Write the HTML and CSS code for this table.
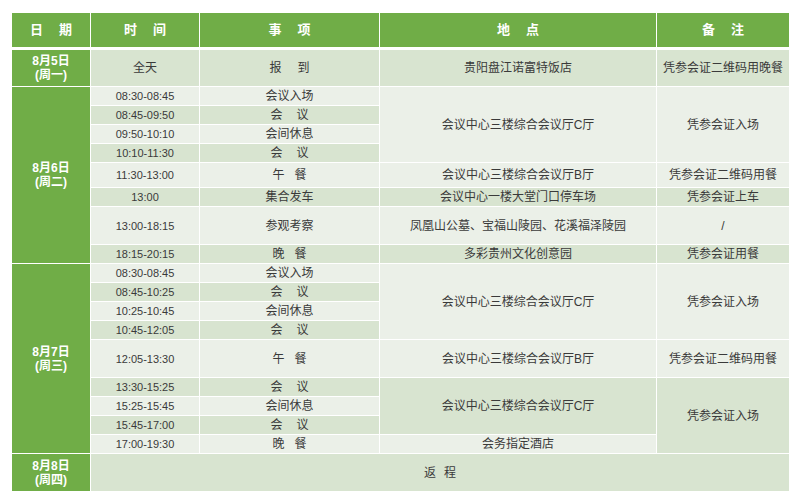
FILE: index.html
```html
<!DOCTYPE html>
<html lang="zh-CN">
<head>
<meta charset="utf-8">
<title>会议日程</title>
<link rel="stylesheet" href="styles.css">
</head>
<body>
<table class="sched">
  <colgroup>
    <col class="c-date"><col class="c-time"><col class="c-item"><col class="c-place"><col class="c-note">
  </colgroup>
  <thead>
    <tr class="h-head">
      <th><span class="hsp">日期</span></th>
      <th><span class="hsp">时间</span></th>
      <th><span class="hsp">事项</span></th>
      <th><span class="hsp">地点</span></th>
      <th><span class="hsp">备注</span></th>
    </tr>
  </thead>
  <tbody>
    <tr class="h36 dk">
      <td class="date">8月5日<br>(周一)</td>
      <td>全天</td>
      <td><span class="sp16">报到</span></td>
      <td>贵阳盘江诺富特饭店</td>
      <td>凭参会证二维码用晚餐</td>
    </tr>

    <tr class="h18 lt">
      <td class="date" rowspan="8">8月6日<br>(周二)</td>
      <td class="tm">08:30-08:45</td>
      <td>会议入场</td>
      <td rowspan="4" class="lt">会议中心三楼综合会议厅C厅</td>
      <td rowspan="4" class="lt">凭参会证入场</td>
    </tr>
    <tr class="h18 dk"><td class="tm">08:45-09:50</td><td><span class="sp14">会议</span></td></tr>
    <tr class="h18 lt"><td class="tm">09:50-10:10</td><td>会间休息</td></tr>
    <tr class="h18 dk"><td class="tm">10:10-11:30</td><td><span class="sp14">会议</span></td></tr>
    <tr class="h24 lt">
      <td class="tm">11:30-13:00</td>
      <td><span class="sp10">午餐</span></td>
      <td>会议中心三楼综合会议厅B厅</td>
      <td>凭参会证二维码用餐</td>
    </tr>
    <tr class="h18 dk">
      <td class="tm">13:00</td>
      <td>集合发车</td>
      <td>会议中心一楼大堂门口停车场</td>
      <td>凭参会证上车</td>
    </tr>
    <tr class="h37 lt">
      <td class="tm">13:00-18:15</td>
      <td>参观考察</td>
      <td>凤凰山公墓、宝福山陵园、花溪福泽陵园</td>
      <td>/</td>
    </tr>
    <tr class="h18 dk">
      <td class="tm">18:15-20:15</td>
      <td><span class="sp10">晚餐</span></td>
      <td>多彩贵州文化创意园</td>
      <td>凭参会证用餐</td>
    </tr>

    <tr class="h18 lt">
      <td class="date" rowspan="9">8月7日<br>(周三)</td>
      <td class="tm">08:30-08:45</td>
      <td>会议入场</td>
      <td rowspan="4" class="lt">会议中心三楼综合会议厅C厅</td>
      <td rowspan="4" class="lt">凭参会证入场</td>
    </tr>
    <tr class="h18 dk"><td class="tm">08:45-10:25</td><td><span class="sp14">会议</span></td></tr>
    <tr class="h18 lt"><td class="tm">10:25-10:45</td><td>会间休息</td></tr>
    <tr class="h18 dk"><td class="tm">10:45-12:05</td><td><span class="sp14">会议</span></td></tr>
    <tr class="h37 lt">
      <td class="tm">12:05-13:30</td>
      <td><span class="sp10">午餐</span></td>
      <td>会议中心三楼综合会议厅B厅</td>
      <td>凭参会证二维码用餐</td>
    </tr>
    <tr class="h18 dk">
      <td class="tm">13:30-15:25</td>
      <td><span class="sp14">会议</span></td>
      <td rowspan="3" class="dk">会议中心三楼综合会议厅C厅</td>
      <td rowspan="4" class="dk">凭参会证入场</td>
    </tr>
    <tr class="h18 lt"><td class="tm">15:25-15:45</td><td>会间休息</td></tr>
    <tr class="h18 dk"><td class="tm">15:45-17:00</td><td><span class="sp14">会议</span></td></tr>
    <tr class="h18 lt">
      <td class="tm">17:00-19:30</td>
      <td><span class="sp10">晚餐</span></td>
      <td>会务指定酒店</td>
    </tr>

    <tr class="h37 dk">
      <td class="date">8月8日<br>(周四)</td>
      <td colspan="4"><span class="sp8">返程</span></td>
    </tr>
  </tbody>
</table>
</body>
</html>
```

FILE: styles.css
```css
body {
  margin: 0;
  background: #ffffff;
  font-family: "Liberation Sans", "Noto Sans CJK SC", sans-serif;
}

.sched {
  border-collapse: separate;
  border-spacing: 1px;
  table-layout: fixed;
  width: 779px;
  margin: 12px 0 0 11px;
}

.c-date { width: 78px; }
.c-time { width: 108px; }
.c-item { width: 179px; }
.c-place { width: 276px; }
.c-note { width: 132px; }

.sched th,
.sched td {
  padding: 0;
  box-sizing: border-box;
  text-align: center;
  vertical-align: middle;
  white-space: nowrap;
  font-size: 12px;
  line-height: 14px;
  color: #3a3a3a;
}

.sched th {
  background: #70ad47;
  color: #ffffff;
  font-weight: 700;
  font-size: 13px;
  border-bottom: 2px solid #ffffff;
}

.h-head { height: 36px; }
.h18 { height: 18px; }
.h24 { height: 24px; }
.h36 { height: 36px; }
.h37 { height: 37px; }

.dk td { background: #d8e4d0; }
.lt td { background: #ebf0e8; }
.sched td.dk { background: #d8e4d0; }
.sched td.lt { background: #ebf0e8; }

.sched td.date {
  background: #70ad47;
  color: #ffffff;
  font-weight: 700;
  font-size: 12px;
  line-height: 14px;
}

.sched td.tm {
  font-size: 11px;
}

.hsp { letter-spacing: 16px; margin-right: -16px; }
.sp16 { letter-spacing: 16px; margin-right: -16px; }
.sp14 { letter-spacing: 14px; margin-right: -14px; }
.sp10 { letter-spacing: 10px; margin-right: -10px; }
.sp8 { letter-spacing: 8px; margin-right: -8px; }
```
